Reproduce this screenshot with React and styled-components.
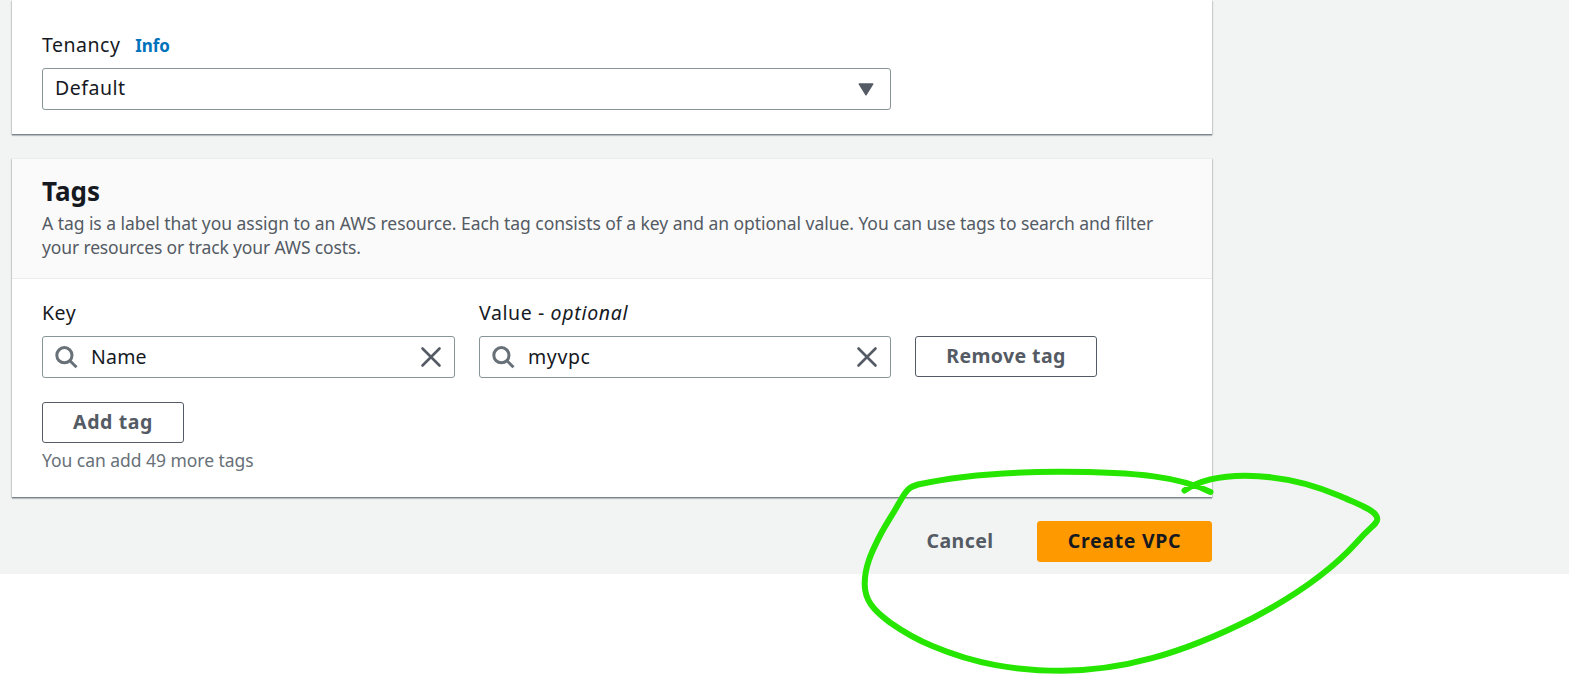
import React from "react";
import styled, { createGlobalStyle } from "styled-components";

const GlobalStyle = createGlobalStyle`
  *, *::before, *::after { box-sizing: border-box; }
  body {
    margin: 0;
    background: #fff;
    color: #16191f;
    font-family: "Noto Sans", "Open Sans", sans-serif;
    font-size: 19.5px;
  }
  button, input { font: inherit; color: inherit; }
`;

const Page = styled.div`
  position: relative;
  width: 1569px;
  height: 679px;
  overflow: hidden;
`;

const Content = styled.main`
  height: 574px;
  padding: 0 357px 0 12px;
  background: #f2f3f3;
`;

const Card = styled.section`
  background: #fff;
  border-top: 1px solid #eaeded;
  box-shadow: 0 1px 0 0 #7b878c, 0 2px 1px 0 rgba(0, 28, 36, 0.2),
    1px 1px 1px 0 rgba(0, 28, 36, 0.15), -1px 1px 1px 0 rgba(0, 28, 36, 0.15);
`;

const TenancyCard = styled(Card)`
  height: 134px;
  padding: 30px 30px 0;
  border-top: 0;
`;

const TagsCard = styled(Card)`
  height: 339px;
  margin-top: 24px;
`;

const Label = styled.label`
  display: flex;
  align-items: baseline;
  height: 30px;
  line-height: 30px;
  white-space: pre;
  letter-spacing: ${(p) => p.$track || 0}px;
`;

const Optional = styled.i`
  letter-spacing: ${(p) => p.$track || 0}px;
`;

const InfoLink = styled.a`
  margin-left: 15px;
  color: #0073bb;
  font-size: 17px;
  font-weight: 700;
  letter-spacing: -0.1px;
`;

const Field = styled.div`
  display: flex;
  align-items: center;
  width: ${(p) => p.$width}px;
  height: 42px;
  padding: 0 12px 0 11px;
  border: 1px solid #879596;
  border-radius: 3px;
  background: #fff;

  svg { flex: none; }
`;

const Select = styled(Field)`
  justify-content: space-between;
  margin-top: 8px;
  padding-left: 12px;
  padding-right: 16px;
`;

const FieldText = styled.span`
  flex: 1;
  padding-bottom: 2px;
  line-height: 30px;
  letter-spacing: ${(p) => p.$track || 0}px;
`;

const SearchText = styled(FieldText)`
  padding-left: 13px;
  padding-bottom: 0;
`;

const CardHeader = styled.header`
  height: 120px;
  padding: 16px 30px 0;
  background: #fafafa;
  border-bottom: 1px solid #eaeded;
`;

const Title = styled.h2`
  margin: 0;
  font-size: 26px;
  font-weight: 700;
  line-height: 32px;
`;

const Description = styled.p`
  margin: 4px 0 0;
  color: #545b64;
  font-size: 17.5px;
  line-height: 24px;
  white-space: nowrap;
`;

const Line = styled.span`
  display: block;
  letter-spacing: ${(p) => p.$track || 0}px;
`;

const TagRow = styled.div`
  display: flex;
  align-items: flex-end;
  gap: 24px;
  padding: 19px 30px 0;
`;

const Column = styled.div`
  display: flex;
  flex-direction: column;
  gap: 8px;
`;

const Button = styled.button`
  width: ${(p) => p.$width}px;
  height: 41px;
  padding: 0 0 2px;
  border: 1px solid #545b64;
  border-radius: 3px;
  background: #fff;
  color: #545b64;
  font-weight: 700;
  white-space: nowrap;
  letter-spacing: ${(p) => p.$track || 0}px;
`;

const RemoveButton = styled(Button)`
  margin-bottom: 1px;
`;

const LinkButton = styled(Button)`
  border-color: transparent;
  background: transparent;
`;

const PrimaryButton = styled(Button)`
  border-color: #ff9900;
  background: #ff9900;
  color: #16191f;
`;

const AddArea = styled.div`
  padding: 24px 30px 0;
`;

const Hint = styled.div`
  margin-top: 5px;
  color: #687078;
  font-size: 17.5px;
  line-height: 24px;
  letter-spacing: ${(p) => p.$track || 0}px;
`;

const Actions = styled.div`
  display: flex;
  justify-content: flex-end;
  gap: 12px;
  padding-top: 24px;
`;

const Overlay = styled.svg`
  position: absolute;
  inset: 0;
  pointer-events: none;
`;

const SearchIcon = () => (
  <svg width="24" height="24" viewBox="0 0 24 24" fill="none" stroke="#687078" strokeWidth="3">
    <circle cx="10.4" cy="10.2" r="7.6" />
    <path d="M15.7 15.5L22.5 22.2" />
  </svg>
);

const CloseIcon = () => (
  <svg width="22" height="22" viewBox="0 0 22 22" fill="none" stroke="#545b64" strokeWidth="2.6" strokeLinecap="round">
    <path d="M2.5 2.5L19.5 19.5M19.5 2.5L2.5 19.5" />
  </svg>
);

const CaretIcon = () => (
  <svg width="16" height="13" viewBox="0 0 16 13">
    <path d="M1.2 1H14.8L8 11.8Z" fill="#545b64" stroke="#545b64" strokeWidth="1.4" strokeLinejoin="round" />
  </svg>
);

const MarkerStroke = () => (
  <Overlay width="1569" height="679" viewBox="0 0 1569 679" fill="none">
    <path
      d="M1210.5 492C1180 477 1140 472 1060 471.8C1010 471.8 960 475 918 484.5C907 487.5 905 493 899 503C893 514 886 524 880 535.5C871 553 864.7 567 864.7 584C864.7 600 873 610 890 622.5C905 633 920 641 933 646.3C975 664 1015 670.7 1062 670.7C1120 670.7 1180 655 1253 618C1290 598.5 1330 572 1357 542C1370 527 1377.3 524 1377.3 519C1377.3 511 1362 506 1340 496C1310 483 1280 475.8 1245 475.8C1222 475.8 1200 480 1184.5 490.5"
      stroke="#26e600"
      strokeWidth="6"
      strokeLinecap="round"
      strokeLinejoin="round"
    />
  </Overlay>
);

export default function App() {
  return (
    <Page>
      <GlobalStyle />
      <Content>
        <TenancyCard>
          <Label $track={0.5}>
            Tenancy<InfoLink>Info</InfoLink>
          </Label>
          <Select $width={849}>
            <FieldText $track={0.5}>Default</FieldText>
            <CaretIcon />
          </Select>
        </TenancyCard>

        <TagsCard>
          <CardHeader>
            <Title>Tags</Title>
            <Description>
              <Line $track={-0.046}>
                A tag is a label that you assign to an AWS resource. Each tag consists of a key and an optional value. You can use tags to search and filter
              </Line>
              <Line $track={-0.14}>your resources or track your AWS costs.</Line>
            </Description>
          </CardHeader>
          <TagRow>
            <Column>
              <Label $track={0.5}>Key</Label>
              <Field $width={413}>
                <SearchIcon />
                <SearchText $track={0.2}>Name</SearchText>
                <CloseIcon />
              </Field>
            </Column>
            <Column>
              <Label $track={0.6}>
                Value - <Optional $track={0.7}>optional</Optional>
              </Label>
              <Field $width={412}>
                <SearchIcon />
                <SearchText $track={0.6}>myvpc</SearchText>
                <CloseIcon />
              </Field>
            </Column>
            <RemoveButton $width={182} $track={0.4}>Remove tag</RemoveButton>
          </TagRow>
          <AddArea>
            <Button $width={142} $track={0.6}>Add tag</Button>
            <Hint $track={-0.04}>You can add 49 more tags</Hint>
          </AddArea>
        </TagsCard>

        <Actions>
          <LinkButton $width={130} $track={0.4}>Cancel</LinkButton>
          <PrimaryButton $width={175} $track={0.7}>Create VPC</PrimaryButton>
        </Actions>
      </Content>
      <MarkerStroke />
    </Page>
  );
}
